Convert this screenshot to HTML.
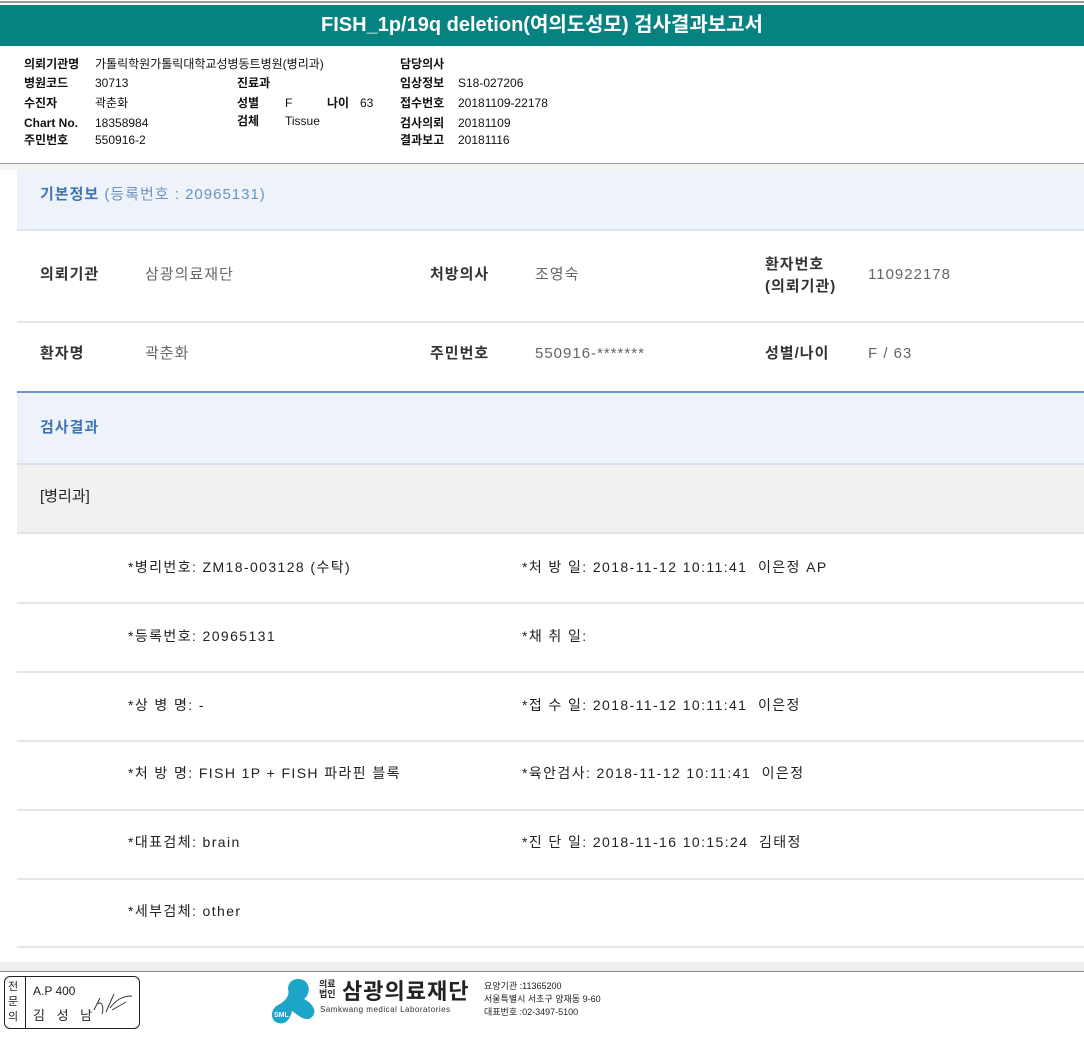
<!DOCTYPE html>
<html><head><meta charset="utf-8"><style>
*{margin:0;padding:0;box-sizing:border-box}
body{width:1084px;height:1040px;background:#fff;position:relative;overflow:hidden;font-family:"Liberation Sans","Noto Sans CJK KR",sans-serif;color:#222}
.a{position:absolute;white-space:nowrap}
.hd{font-size:12px;color:#111;line-height:16px}
.b{font-weight:bold}
.k{font-size:15px;color:#333;font-weight:bold;letter-spacing:1px;line-height:20px}
.v{font-size:15px;color:#666;letter-spacing:1px;line-height:20px}
.r{font-size:14px;color:#222;letter-spacing:1.4px;line-height:20px}
.line{position:absolute;left:17px;right:0;height:2px;background:#e6e6e6}
</style></head><body>
<div class="a" style="left:0;top:1px;width:1084px;height:2px;background:#999"></div>
<div class="a" style="left:0;top:5px;width:1084px;height:41px;background:#068281;color:#fff;font-size:20px;font-weight:bold;text-align:center;line-height:41px">FISH_1p/19q deletion(여의도성모) 검사결과보고서</div>

<div class="a hd b" style="left:24px;top:56px">의뢰기관명</div><div class="a hd" style="left:95px;top:56px">가톨릭학원가톨릭대학교성병동트병원(병리과)</div>
<div class="a hd b" style="left:24px;top:75px">병원코드</div><div class="a hd" style="left:95px;top:75px">30713</div>
<div class="a hd b" style="left:24px;top:95px">수진자</div><div class="a hd" style="left:95px;top:95px">곽춘화</div>
<div class="a hd b" style="left:24px;top:115px">Chart No.</div><div class="a hd" style="left:95px;top:115px">18358984</div>
<div class="a hd b" style="left:24px;top:132px">주민번호</div><div class="a hd" style="left:95px;top:132px">550916-2</div>
<div class="a hd b" style="left:237px;top:75px">진료과</div>
<div class="a hd b" style="left:237px;top:95px">성별</div><div class="a hd" style="left:285px;top:95px">F</div><div class="a hd b" style="left:327px;top:95px">나이</div><div class="a hd" style="left:360px;top:95px">63</div>
<div class="a hd b" style="left:237px;top:113px">검체</div><div class="a hd" style="left:285px;top:113px">Tissue</div>
<div class="a hd b" style="left:400px;top:56px">담당의사</div>
<div class="a hd b" style="left:400px;top:75px">임상정보</div><div class="a hd" style="left:458px;top:75px">S18-027206</div>
<div class="a hd b" style="left:400px;top:95px">접수번호</div><div class="a hd" style="left:458px;top:95px">20181109-22178</div>
<div class="a hd b" style="left:400px;top:115px">검사의뢰</div><div class="a hd" style="left:458px;top:115px">20181109</div>
<div class="a hd b" style="left:400px;top:132px">결과보고</div><div class="a hd" style="left:458px;top:132px">20181116</div>
<div class="a" style="left:0;top:163px;width:1084px;height:1px;background:#999"></div>
<div class="a" style="left:0;top:164px;width:1084px;height:6px;background:#f3f3f3"></div>

<div class="a" style="left:17px;top:170px;width:1067px;height:61px;background:#edf3f9;border-bottom:2px solid #dbe5ee"></div>
<div class="a" style="left:40px;top:185px;font-size:15px;color:#3f75b3;letter-spacing:1px;line-height:20px"><b>기본정보</b> <span style="color:#6b93c0">(등록번호 : 20965131)</span></div>

<div class="a k" style="left:40px;top:265px">의뢰기관</div><div class="a v" style="left:145px;top:265px">삼광의료재단</div>
<div class="a k" style="left:430px;top:265px">처방의사</div><div class="a v" style="left:535px;top:265px">조영숙</div>
<div class="a k" style="left:765px;top:254px;line-height:22px">환자번호<br>(의뢰기관)</div><div class="a v" style="left:868px;top:265px">110922178</div>
<div class="line" style="top:321px"></div>
<div class="a k" style="left:40px;top:344px">환자명</div><div class="a v" style="left:145px;top:344px">곽춘화</div>
<div class="a k" style="left:430px;top:344px">주민번호</div><div class="a v" style="left:535px;top:344px">550916-*******</div>
<div class="a k" style="left:765px;top:344px">성별/나이</div><div class="a v" style="left:868px;top:344px">F / 63</div>

<div class="a" style="left:17px;top:391px;width:1067px;height:74px;background:#edf3f9;border-top:2px solid #6e97c4;border-bottom:2px solid #d6e1eb"></div>
<div class="a b" style="left:40px;top:418px;font-size:15px;color:#3f75b3;letter-spacing:1px;line-height:20px">검사결과</div>
<div class="a" style="left:17px;top:465px;width:1067px;height:69px;background:#f1f1f1;border-bottom:2px solid #e4e4e4"></div>
<div class="a" style="left:40px;top:487px;font-size:15px;color:#222;line-height:20px">[병리과]</div>

<div class="a r" style="left:128px;top:557px">*병리번호: ZM18-003128 (수탁)</div><div class="a r" style="left:522px;top:557px">*처 방 일: 2018-11-12 10:11:41 &nbsp;이은정 AP</div>
<div class="line" style="top:602px"></div>
<div class="a r" style="left:128px;top:626px">*등록번호: 20965131</div><div class="a r" style="left:522px;top:626px">*채 취 일:</div>
<div class="line" style="top:671px"></div>
<div class="a r" style="left:128px;top:695px">*상 병 명: -</div><div class="a r" style="left:522px;top:695px">*접 수 일: 2018-11-12 10:11:41 &nbsp;이은정</div>
<div class="line" style="top:740px"></div>
<div class="a r" style="left:128px;top:763px">*처 방 명: FISH 1P + FISH 파라핀 블록</div><div class="a r" style="left:522px;top:763px">*육안검사: 2018-11-12 10:11:41 &nbsp;이은정</div>
<div class="line" style="top:809px"></div>
<div class="a r" style="left:128px;top:832px">*대표검체: brain</div><div class="a r" style="left:522px;top:832px">*진 단 일: 2018-11-16 10:15:24 &nbsp;김태정</div>
<div class="line" style="top:878px"></div>
<div class="a r" style="left:128px;top:901px">*세부검체: other</div>
<div class="line" style="top:946px"></div>
<div class="a" style="left:0;top:962px;width:1084px;height:9px;background:#efefef"></div>
<div class="a" style="left:0;top:971px;width:1084px;height:1px;background:#888"></div>

<div class="a" style="left:4px;top:976px;width:136px;height:53px;border:1px solid #222;border-radius:6px"></div>
<div class="a" style="left:25px;top:976px;width:1px;height:53px;background:#222"></div>
<div class="a" style="left:8px;top:980px;font-size:11px;line-height:15px;width:12px;white-space:normal">전문의</div>
<div class="a" style="left:33px;top:984px;font-size:12px">A.P 400</div>
<div class="a" style="left:33px;top:1005px;font-size:13px;letter-spacing:4px">김 성 남</div>
<svg class="a" style="left:92px;top:990px" width="45" height="30"><path d="M2 20 L8 8 M6 14 C10 10 12 18 10 24 M14 22 L22 4 M18 18 C24 10 30 6 40 6 M20 20 L34 12" stroke="#333" fill="none" stroke-width="1"/></svg>

<svg class="a" style="left:268px;top:975px" width="52" height="52"><path d="M30 4 C42 4 44 18 36 24 C44 28 50 36 44 42 C38 48 30 40 24 36 C22 44 18 50 10 48 C2 46 2 34 10 30 C18 26 22 20 20 14 C20 8 24 4 30 4Z" fill="#1ea6c9"/><text x="6" y="42" font-size="7" fill="#fff" font-family="Liberation Sans" font-weight="bold">SML</text></svg>
<div class="a" style="left:319px;top:979px;font-size:9px;line-height:10px;font-weight:bold;color:#222">의료<br>법인</div>
<div class="a" style="left:342px;top:974px;font-size:22px;font-weight:bold;color:#222;letter-spacing:1px">삼광의료재단</div>
<div class="a" style="left:320px;top:1005px;font-size:8px;color:#333;letter-spacing:0.5px">Samkwang medical Laboratories</div>
<div class="a" style="left:484px;top:980px;font-size:9px;line-height:13px;color:#222">요양기관 :11365200<br>서울특별시 서초구 양재동 9-60<br>대표번호 :02-3497-5100</div>
</body></html>
